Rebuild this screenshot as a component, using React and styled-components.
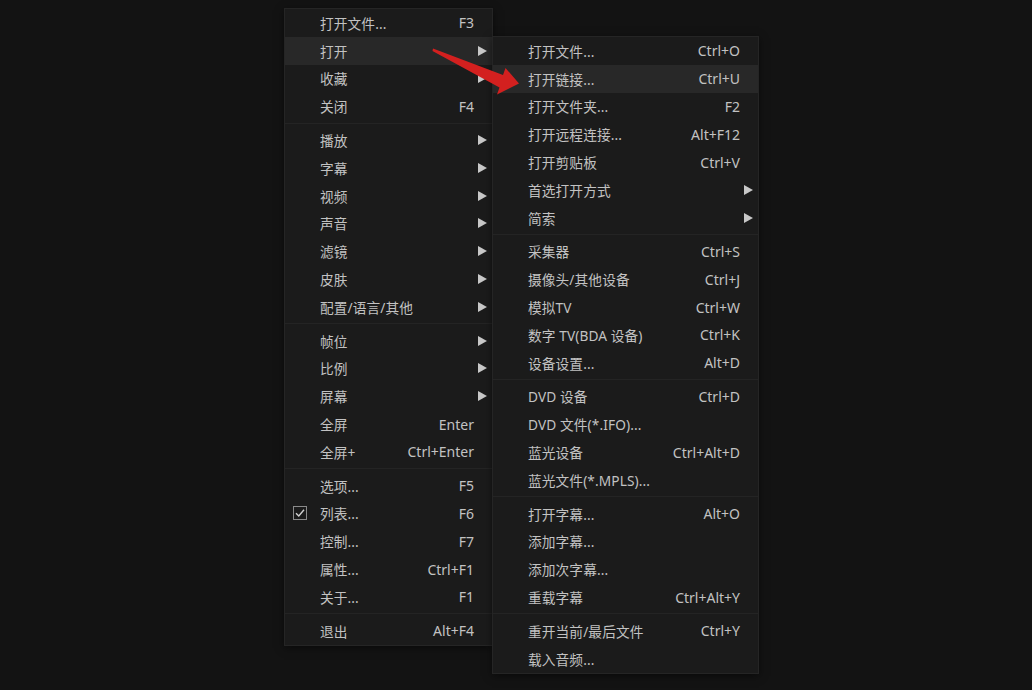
import styled, { createGlobalStyle } from "styled-components";

const Global = createGlobalStyle`
  html, body {
    margin: 0;
    padding: 0;
    background: #131313;
  }
`;

const Screen = styled.div`
  position: relative;
  width: 1032px;
  height: 690px;
  background: #131313;
  overflow: hidden;
  font-family: "Noto Sans", "Noto Sans CJK SC", sans-serif;
`;

const Menu = styled.div`
  position: absolute;
  left: ${(p) => p.$left}px;
  top: ${(p) => p.$top}px;
  width: ${(p) => p.$width}px;
  box-sizing: border-box;
  background: #1b1b1b;
  border: 1px solid #252525;
  box-shadow: 0 2px 8px rgba(0, 0, 0, 0.5);
  display: flex;
  flex-direction: column;
`;

const Row = styled.div`
  height: 27.8px;
  display: grid;
  grid-template-columns: 35px 1fr auto 18px;
  align-items: center;
  background: ${(p) => (p.$active ? "#282828" : "transparent")};
  color: #c2c2c2;
  font-size: 13.7px;
  white-space: nowrap;
`;

const Check = styled.span`
  display: flex;
  justify-content: center;
  margin-left: -6px;
`;

const Label = styled.span`
  letter-spacing: 0.1px;
`;

const Key = styled.span`
  text-align: right;
  font-size: 14px;
`;

const Arrow = styled.span`
  width: 0;
  height: 0;
  margin-left: 4px;
  border-top: 5.5px solid transparent;
  border-bottom: 5.5px solid transparent;
  border-left: 9px solid #c8c8c8;
`;

const Sep = styled.div`
  height: 6px;
  display: flex;
  align-items: center;
  &::after {
    content: "";
    flex: 1;
    height: 1px;
    background: #242424;
  }
`;

const Pointer = styled.svg`
  position: absolute;
  left: 0;
  top: 0;
  pointer-events: none;
`;

const leftMenu = [
  ["打开文件...", "F3"],
  ["打开", null, true, true],
  ["收藏", null, true],
  ["关闭", "F4"],
  "-",
  ["播放", null, true],
  ["字幕", null, true],
  ["视频", null, true],
  ["声音", null, true],
  ["滤镜", null, true],
  ["皮肤", null, true],
  ["配置/语言/其他", null, true],
  "-",
  ["帧位", null, true],
  ["比例", null, true],
  ["屏幕", null, true],
  ["全屏", "Enter"],
  ["全屏+", "Ctrl+Enter"],
  "-",
  ["选项...", "F5"],
  ["列表...", "F6", false, false, true],
  ["控制...", "F7"],
  ["属性...", "Ctrl+F1"],
  ["关于...", "F1"],
  "-",
  ["退出", "Alt+F4"],
];

const rightMenu = [
  ["打开文件...", "Ctrl+O"],
  ["打开链接...", "Ctrl+U", false, true],
  ["打开文件夹...", "F2"],
  ["打开远程连接...", "Alt+F12"],
  ["打开剪贴板", "Ctrl+V"],
  ["首选打开方式", null, true],
  ["简索", null, true],
  "-",
  ["采集器", "Ctrl+S"],
  ["摄像头/其他设备", "Ctrl+J"],
  ["模拟TV", "Ctrl+W"],
  ["数字 TV(BDA 设备)", "Ctrl+K"],
  ["设备设置...", "Alt+D"],
  "-",
  ["DVD 设备", "Ctrl+D"],
  ["DVD 文件(*.IFO)...", ""],
  ["蓝光设备", "Ctrl+Alt+D"],
  ["蓝光文件(*.MPLS)...", ""],
  "-",
  ["打开字幕...", "Alt+O"],
  ["添加字幕...", ""],
  ["添加次字幕...", ""],
  ["重载字幕", "Ctrl+Alt+Y"],
  "-",
  ["重开当前/最后文件", "Ctrl+Y"],
  ["载入音频...", ""],
];

const CheckBox = () => (
  <svg width="14" height="14" viewBox="0 0 14 14">
    <rect x="0.5" y="0.5" width="13" height="13" fill="none" stroke="#8a8a8a" />
    <path d="M3 7.2 L5.8 10 L11 3.8" fill="none" stroke="#d0d0d0" strokeWidth="1.4" />
  </svg>
);

const MenuList = ({ items, ...rest }) => (
  <Menu {...rest}>
    {items.map((it, i) =>
      it === "-" ? (
        <Sep key={i} />
      ) : (
        <Row key={i} $active={it[3]}>
          <Check>{it[4] ? <CheckBox /> : null}</Check>
          <Label>{it[0]}</Label>
          <Key>{it[1]}</Key>
          {it[2] ? <Arrow /> : <span />}
        </Row>
      )
    )}
  </Menu>
);

export default function App() {
  return (
    <Screen>
      <Global />
      <MenuList items={leftMenu} $left={284} $top={8} $width={209} />
      <MenuList items={rightMenu} $left={492} $top={36} $width={267} />
      <Pointer width="1032" height="690">
        <path
          d="M433 48.5 L503 75 L505.5 68 L519 83.5 L497 94.5 L499.5 87.5 L432.5 51 Z"
          fill="#d3201f"
        />
      </Pointer>
    </Screen>
  );
}
